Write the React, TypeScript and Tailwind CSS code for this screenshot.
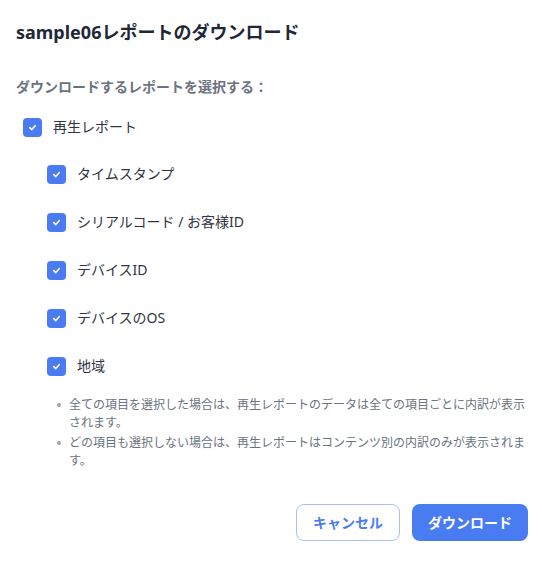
import React from "react";

const font = { fontFamily: '"Noto Sans", "Noto Sans CJK JP", sans-serif' };

function Check() {
  return (
    <span className="flex h-[19px] w-[19px] shrink-0 items-center justify-center rounded-[4px] bg-[#4a7cf1]">
      <svg width="9" height="9" viewBox="0 0 10 10" fill="none">
        <path d="M2 5.2 L4.2 7.3 L8 3" stroke="white" strokeWidth="1.8" strokeLinecap="round" strokeLinejoin="round" />
      </svg>
    </span>
  );
}

function Row({ label }: { label: string }) {
  return (
    <div className="flex h-5 items-center gap-[11px]">
      <Check />
      <span className="text-[14px] leading-5 text-[#2f353f]">{label}</span>
    </div>
  );
}

export default function App() {
  const items = ["タイムスタンプ", "シリアルコード / お客様ID", "デバイスID", "デバイスのOS", "地域"];
  return (
    <div className="h-[562px] w-[542px] bg-white pl-4 pr-[14px] pt-[18px]" style={font}>
      <h2 className="text-[18px] font-bold leading-[28px] text-[#1f2836]">sample06レポートのダウンロード</h2>
      <p className="mt-[31px] text-[14px] font-semibold leading-5 text-[#6b7280]">ダウンロードするレポートを選択する：</p>
      <div className="mt-5 pl-[7px]">
        <Row label="再生レポート" />
      </div>
      <div className="mt-[27px] flex flex-col gap-7 pl-[31px]">
        {items.map((l) => (
          <Row key={l} label={l} />
        ))}
      </div>
      <ul className="mt-5 flex flex-col gap-[2px] pl-[41px]">
        <li className="flex items-start">
          <span className="mr-[8px] mt-[7px] h-[4px] w-[4px] shrink-0 rounded-full bg-[#9ca3af]" />
          <span className="w-[460px] text-[12px] leading-[18px] text-[#6b7280]">
            全ての項目を選択した場合は、再生レポートのデータは全ての項目ごとに内訳が表示されます。
          </span>
        </li>
        <li className="flex items-start">
          <span className="mr-[8px] mt-[7px] h-[4px] w-[4px] shrink-0 rounded-full bg-[#9ca3af]" />
          <span className="w-[460px] text-[12px] leading-[18px] text-[#6b7280]">
            どの項目も選択しない場合は、再生レポートはコンテンツ別の内訳のみが表示されます。
          </span>
        </li>
      </ul>
      <div className="mt-[34px] flex justify-end gap-3">
        <button className="h-[37px] w-[104px] rounded-lg border border-[#a9c1f7] bg-white text-[14px] font-bold text-[#4a7cf1]">
          キャンセル
        </button>
        <button className="h-[37px] w-[116px] rounded-lg bg-[#4a7cf1] text-[14px] font-bold text-white">
          ダウンロード
        </button>
      </div>
    </div>
  );
}
